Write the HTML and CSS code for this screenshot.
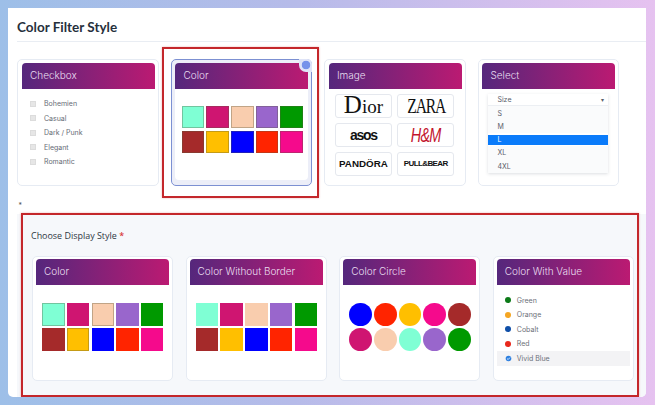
FILE: index.html
```html
<!DOCTYPE html>
<html lang="en">
<head>
<meta charset="utf-8">
<title>Color Filter Style</title>
<link rel="stylesheet" href="styles.css">
</head>
<body>
<main class="panel">
  <h1 class="title">Color Filter Style</h1>
  <div class="row top-row">
    <div class="card">
      <div class="card-head">Checkbox</div>
      <ul class="checks">
        <li><i class="box"></i>Bohemien</li>
        <li><i class="box"></i>Casual</li>
        <li><i class="box"></i>Dark / Punk</li>
        <li><i class="box"></i>Elegant</li>
        <li><i class="box"></i>Romantic</li>
      </ul>
    </div>
    <div class="card selected">
      <div class="card-head">Color</div>
      <div class="swatches">
        <i class="sw edged aqua"></i><i class="sw edged rose"></i><i class="sw edged peach"></i><i class="sw edged purple"></i><i class="sw edged green"></i>
        <i class="sw edged brown"></i><i class="sw edged amber"></i><i class="sw edged blue"></i><i class="sw edged red"></i><i class="sw edged pink"></i>
      </div>
      <span class="dot-mark"></span>
      <span class="hl hl-card"></span>
    </div>
    <div class="card">
      <div class="card-head">Image</div>
      <div class="logos">
        <div class="logo dior"><span><span class="dior-d">D</span>ior</span></div>
        <div class="logo zara"><span>ZARA</span></div>
        <div class="logo asos"><span>asos</span></div>
        <div class="logo hm"><span>H&amp;M</span></div>
        <div class="logo pandora"><span>PANDÖRA</span></div>
        <div class="logo pull"><span>PULL&amp;BEAR</span></div>
      </div>
    </div>
    <div class="card">
      <div class="card-head">Select</div>
      <div class="select">
        <div class="select-top"><span>Size</span><span class="caret">▾</span></div>
        <div class="opt opt-s">S</div>
        <div class="opt opt-m">M</div>
        <div class="opt on">L</div>
        <div class="opt">XL</div>
        <div class="opt">4XL</div>
      </div>
    </div>
  </div>
  <div class="stray">*</div>
  <section class="display">
    <h2 class="label">Choose Display Style <b>*</b></h2>
    <div class="row bottom-row">
      <div class="card">
        <div class="card-head">Color</div>
        <div class="swatches">
          <i class="sw edged aqua"></i><i class="sw rose"></i><i class="sw edged peach"></i><i class="sw purple"></i><i class="sw green"></i>
          <i class="sw brown"></i><i class="sw edged amber"></i><i class="sw blue"></i><i class="sw red"></i><i class="sw pink"></i>
        </div>
      </div>
      <div class="card">
        <div class="card-head">Color Without Border</div>
        <div class="swatches">
          <i class="sw aqua"></i><i class="sw rose"></i><i class="sw peach"></i><i class="sw purple"></i><i class="sw green"></i>
          <i class="sw brown"></i><i class="sw amber"></i><i class="sw blue"></i><i class="sw red"></i><i class="sw pink"></i>
        </div>
      </div>
      <div class="card">
        <div class="card-head">Color Circle</div>
        <div class="swatches circles">
          <i class="sw blue"></i><i class="sw red"></i><i class="sw amber"></i><i class="sw pink"></i><i class="sw brown"></i>
          <i class="sw rose"></i><i class="sw peach"></i><i class="sw aqua"></i><i class="sw purple"></i><i class="sw green"></i>
        </div>
      </div>
      <div class="card">
        <div class="card-head">Color With Value</div>
        <ul class="values">
          <li><i class="vd v-green"></i>Green</li>
          <li><i class="vd v-orange"></i>Orange</li>
          <li><i class="vd v-cobalt"></i>Cobalt</li>
          <li><i class="vd v-red"></i>Red</li>
          <li class="current">
            <svg class="vd-check" viewBox="0 0 8 8" aria-hidden="true"><circle cx="4" cy="4" r="3.2" fill="#2f80e0"/><path d="M2.4 4.1 3.6 5.2 5.7 2.9" fill="none" stroke="#fff" stroke-width="0.9"/></svg>Vivid Blue
          </li>
        </ul>
      </div>
    </div>
    <span class="hl hl-section"></span>
  </section>
</main>
</body>
</html>
```

FILE: styles.css
```css
* { box-sizing: border-box; }
html, body { margin: 0; height: 100%; }
body {
  padding: 8px 9px 8px 8px;
  overflow: hidden;
  background: linear-gradient(90deg, #9dbfe8 0%, #b6bbe9 45%, #e6c2f0 100%);
  font-family: Inter, "Liberation Sans", sans-serif;
}
.panel {
  display: flex;
  flex-direction: column;
  height: 389px;
  background: #fff;
  border-radius: 0 0 5px 5px;
  overflow: hidden;
}
.title {
  height: 34px;
  margin: 0 0 0 9px;
  padding: 9px 0 0;
  border-bottom: 1px solid #e9edf3;
  color: #26303c;
  font: 700 13.5px/20px Lato, sans-serif;
}
.row { display: flex; }
.top-row { gap: 11.8px; margin: 17px 0 0 9.3px; }
.bottom-row { gap: 12.3px; margin-top: 14px; padding-left: 15px; }

.card {
  position: relative;
  width: 141.7px;
  height: 127.3px;
  padding: 2.5px 3px 5px 3.7px;
  background: #fff;
  border: 1px solid #e6ebf3;
  border-radius: 5px;
}
.card-head {
  height: 26px;
  padding-left: 8px;
  border-radius: 4px 4px 0 0;
  background: linear-gradient(90deg, #55277c 0%, #bb1a72 100%);
  color: #eadff0;
  font: 300 10px/25px Inter, sans-serif;
}
.selected { background: #eceef8; border-color: #7c90d2; }
.selected::after {
  content: "";
  position: absolute;
  z-index: 0;
  left: 3.7px; right: 3px; top: 28.5px; bottom: 5px;
  background: #fff;
  border-radius: 0 0 4px 4px;
}
.selected > * { z-index: 1; }
.dot-mark {
  position: absolute;
  top: -1px; right: -1px;
  width: 13px; height: 13px;
  border-radius: 0 5px 0 7px;
  background: radial-gradient(circle at 7px 6px, #7692ea 0 4px, #dfe4f7 4.6px);
}
.hl {
  position: absolute;
  border: 2px solid #c4272b;
  box-shadow: 0 0 2px rgba(196, 39, 43, .35);
  pointer-events: none;
}
.hl-card { left: -9.7px; top: -13.3px; width: 157px; height: 151.5px; }

.swatches {
  position: relative;
  display: grid;
  grid-template-columns: repeat(5, 22.5px);
  grid-auto-rows: 22.8px;
  gap: 2.2px;
  margin: 17.2px 0 0 6.2px;
}
.display .swatches { margin-top: 17.7px; }
.sw { display: block; }
.edged { border: 1px solid rgba(90, 90, 60, .35); }
.circles .sw { border-radius: 50%; }
.aqua { background: #7fffd4; }
.rose { background: #cf1571; }
.peach { background: #f9cdae; }
.purple { background: #9966cc; }
.green { background: #009900; }
.brown { background: #a52a2a; }
.amber { background: #ffbf00; }
.blue { background: #0000ff; }
.red { background: #ff2400; }
.pink { background: #f50a8c; }

.checks, .values { list-style: none; margin: 0; padding: 0; }
.checks { margin: 7.75px 0 0 8px; }
.checks li {
  display: flex;
  align-items: center;
  height: 14.5px;
  color: #666c75;
  font-size: 7px;
}
.box {
  width: 6px; height: 6px;
  margin-right: 8px;
  background: #e6e6e6;
  border: 1px solid #dcdcdc;
}

.logos {
  display: grid;
  grid-template-columns: 57px 57px;
  grid-auto-rows: 23.7px;
  gap: 5.3px;
  margin: 5.5px 0 0 6px;
}
.logo {
  display: flex;
  align-items: center;
  justify-content: center;
  border: 1px solid #e5e8ee;
  border-radius: 3px;
  background: #fff;
  color: #111;
  white-space: nowrap;
}
.logo span { display: inline-block; }
.dior { font: 400 19px/1 "Liberation Serif", serif; }
.logo .dior-d { font-size: 25px; line-height: 19px; }
.zara { font: 400 20px/1 "Liberation Serif", serif; letter-spacing: -1.5px; }
.zara span { transform: scaleX(.78); }
.asos { font: 700 14px/1 "Liberation Sans", sans-serif; letter-spacing: -1.3px; }
.hm { color: #c3142d; font: italic 400 20px/1 "Liberation Sans", sans-serif; letter-spacing: -1px; }
.hm span { transform: scaleX(.72); }
.pandora { font: 700 9.8px/1 "Liberation Sans", sans-serif; }
.pull { font: 700 8px/1 "Liberation Sans", sans-serif; letter-spacing: -.6px; }

.select {
  margin: 5.5px 0 0 6px;
  width: 120px;
  background: #fff;
  box-shadow: 0 1px 3px rgba(60, 70, 90, .18);
  color: #5a606a;
  font-size: 7px;
}
.select-top {
  display: flex;
  justify-content: space-between;
  align-items: center;
  height: 12px;
  padding: 0 4px 0 9px;
  border-bottom: 1px solid #eceff3;
}
.caret { font-size: 6px; }
.opt {
  height: 13.5px;
  padding-left: 9px;
  line-height: 13.5px;
  background: #fafbfc;
}
.opt.on { height: 10px; margin: 2px 0 1.5px; background: #0a7bfa; color: #fff; line-height: 10px; }
.opt-s { height: 14px; line-height: 15px; }
.opt-m { height: 12.5px; }

.stray { height: 27.5px; margin-left: 10.5px; padding-top: 15px; color: #555; font: 7px/10px Inter, sans-serif; }
.display {
  position: relative;
  flex: 1;
  margin-left: 9px;
  padding-top: 15px;
  background: #f6f8fb;
}
.label {
  margin: 0 0 0 14px;
  height: 13px;
  color: #2e3742;
  font: 500 8.95px/13px "Open Sans", sans-serif;
}
.label b { color: #d83a3a; font-weight: 600; }
.display .card { width: 141.3px; height: 125px; padding-left: 3px; padding-right: 3.3px; }
.hl-section { left: 3.7px; right: 7px; top: -.7px; bottom: 0; }

.values { margin-top: 7.75px; }
.values li {
  display: flex;
  align-items: center;
  height: 14.5px;
  padding-left: 8px;
  color: #6c7079;
  font-size: 7px;
}
.vd { width: 6px; height: 6px; margin-right: 6px; border-radius: 50%; }
.v-green { background: #0c7a18; }
.v-orange { background: #f5a623; }
.v-cobalt { background: #0f4fa8; }
.v-red { background: #e8281c; }
.values .current { background: #f3f3f5; }
.vd-check { width: 7px; height: 7px; margin-right: 5px; }
```
